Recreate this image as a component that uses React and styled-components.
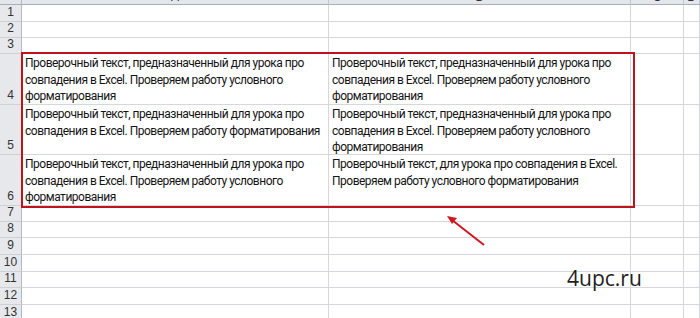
import React from "react";
import styled, { createGlobalStyle } from "styled-components";

const GlobalStyle = createGlobalStyle`
  html, body {
    margin: 0;
    padding: 0;
    background: #ffffff;
    overflow: hidden;
  }
`;

const GRID = "#d4d7dc";

const Sheet = styled.div`
  position: relative;
  width: 700px;
  height: 318px;
  overflow: hidden;
  display: grid;
  grid-template-columns: 22px 307px 302px 53px 1fr;
  grid-template-rows: ${(p) => p.rows.map((h) => `${h}px`).join(" ")};
  font-family: "Roboto", "Liberation Sans", sans-serif;
`;

const Corner = styled.div`
  background: #e3e6ea;
  border-right: 1px solid #b3b9c1;
  border-bottom: 1px solid #a9afb7;
`;

const ColHeader = styled.div`
  background: #e3e6ea;
  border-right: 1px solid #c3c8ce;
  border-bottom: 1px solid #a9afb7;
  display: flex;
  justify-content: center;
  align-items: flex-end;
  overflow: hidden;
  font-family: "Liberation Sans", Arial, sans-serif;
  font-size: 12px;
  line-height: 12px;
  color: #333;
`;

const HeaderLetter = styled.span`
  transform: translateY(-1px);
`;

const RowHeader = styled.div`
  background: #e6e8eb;
  border-right: 1px solid #b3b9c1;
  border-bottom: 1px solid #cdd0d5;
  display: flex;
  justify-content: center;
  align-items: flex-end;
  padding-bottom: 2px;
  box-sizing: border-box;
  font-family: "Liberation Sans", Arial, sans-serif;
  font-size: 12px;
  line-height: 13px;
  color: #333;
`;

const Cell = styled.div`
  border-right: 1px solid ${GRID};
  border-bottom: 1px solid ${GRID};
  box-sizing: border-box;
  padding: 1px 3px 0;
  overflow: hidden;
  font-size: 12px;
  letter-spacing: -0.5px;
  line-height: 16.5px;
  color: #141414;
`;

const Line = styled.div`
  white-space: nowrap;
`;

const Selection = styled.div`
  position: absolute;
  left: 21px;
  top: 52px;
  width: 614px;
  height: 156px;
  box-sizing: border-box;
  border: 2px solid #c0141d;
  pointer-events: none;
`;

const Arrow = styled.svg`
  position: absolute;
  left: 440px;
  top: 210px;
  width: 50px;
  height: 40px;
  overflow: visible;
`;

const Watermark = styled.div`
  position: absolute;
  left: 567px;
  top: 264px;
  font-family: "Open Sans", "Noto Sans", sans-serif;
  font-size: 21px;
  line-height: 28px;
  color: #1e1e1e;
`;

const long = [
  "Проверочный текст, предназначенный для урока про",
  "совпадения в Excel. Проверяем работу условного",
  "форматирования",
];

const rows = [
  { n: 1, h: 17 },
  { n: 2, h: 16 },
  { n: 3, h: 16 },
  { n: 4, h: 51, a: long, b: long },
  {
    n: 5,
    h: 50,
    a: [
      "Проверочный текст, предназначенный для урока про",
      "совпадения в Excel. Проверяем работу форматирования",
    ],
    b: long,
  },
  {
    n: 6,
    h: 51,
    a: long,
    b: [
      "Проверочный текст, для урока про совпадения в Excel.",
      "Проверяем работу условного форматирования",
    ],
  },
  { n: 7, h: 16 },
  { n: 8, h: 16 },
  { n: 9, h: 17 },
  { n: 10, h: 17 },
  { n: 11, h: 16 },
  { n: 12, h: 17 },
  { n: 13, h: 17 },
];

const Lines = ({ items }) =>
  items ? items.map((t, i) => <Line key={i}>{t}</Line>) : null;

export default function App() {
  return (
    <>
      <GlobalStyle />
      <Sheet rows={[5, ...rows.map((r) => r.h)]}>
        <Corner />
        {["A", "B", "C", "D"].map((c) => (
          <ColHeader key={c}>
            <HeaderLetter>{c}</HeaderLetter>
          </ColHeader>
        ))}
        {rows.map((r) => (
          <React.Fragment key={r.n}>
            <RowHeader>{r.n}</RowHeader>
            <Cell>
              <Lines items={r.a} />
            </Cell>
            <Cell>
              <Lines items={r.b} />
            </Cell>
            <Cell />
            <Cell />
          </React.Fragment>
        ))}
        <Selection />
        <Arrow viewBox="0 0 50 40">
          <line x1="44" y1="35" x2="12" y2="10" stroke="#d0161e" strokeWidth="2" />
          <polygon points="7,6 17,8 12,14" fill="#d0161e" />
        </Arrow>
        <Watermark>4upc.ru</Watermark>
      </Sheet>
    </>
  );
}
